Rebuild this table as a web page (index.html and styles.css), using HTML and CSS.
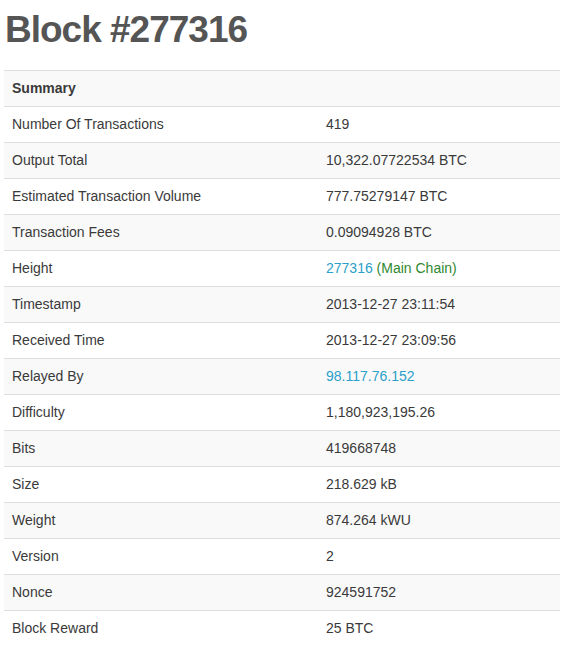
FILE: index.html
```html
<!DOCTYPE html>
<html>
<head>
<meta charset="utf-8">
<link rel="stylesheet" href="styles.css">
</head>
<body>
<div class="page">
  <h1 class="title">Block #277316</h1>
  <table class="summary">
    <tbody>
      <tr class="head"><th colspan="2">Summary</th></tr>
      <tr><td class="k">Number Of Transactions</td><td>419</td></tr>
      <tr><td class="k">Output Total</td><td>10,322.07722534 BTC</td></tr>
      <tr><td class="k">Estimated Transaction Volume</td><td>777.75279147 BTC</td></tr>
      <tr><td class="k">Transaction Fees</td><td>0.09094928 BTC</td></tr>
      <tr><td class="k">Height</td><td><a class="link">277316</a> <span class="main">(Main Chain)</span></td></tr>
      <tr><td class="k">Timestamp</td><td>2013-12-27 23:11:54</td></tr>
      <tr><td class="k">Received Time</td><td>2013-12-27 23:09:56</td></tr>
      <tr><td class="k">Relayed By</td><td><a class="link">98.117.76.152</a></td></tr>
      <tr><td class="k">Difficulty</td><td>1,180,923,195.26</td></tr>
      <tr><td class="k">Bits</td><td>419668748</td></tr>
      <tr><td class="k">Size</td><td>218.629 kB</td></tr>
      <tr><td class="k">Weight</td><td>874.264 kWU</td></tr>
      <tr><td class="k">Version</td><td>2</td></tr>
      <tr><td class="k">Nonce</td><td>924591752</td></tr>
      <tr><td class="k">Block Reward</td><td>25 BTC</td></tr>
    </tbody>
  </table>
</div>
</body>
</html>
```
FILE: styles.css
```css
html, body {
  margin: 0;
  padding: 0;
  background: #ffffff;
}
.page {
  padding: 0 10px 0 4px;
  font-family: "Liberation Sans", Arial, sans-serif;
  color: #333;
}
.title {
  margin: 0;
  padding: 10px 0 0 1px;
  height: 60px;
  box-sizing: border-box;
  font-size: 37px;
  line-height: 40px;
  font-weight: bold;
  letter-spacing: -1px;
  color: #555;
}
.summary {
  width: 556px;
  border-collapse: collapse;
  border-spacing: 0;
  font-size: 14px;
  margin-top: 10px;
}
.summary th,
.summary td {
  height: 36px;
  box-sizing: border-box;
  padding: 0 8px 2px;
  line-height: 20px;
  border-top: 1px solid #dddddd;
  text-align: left;
  vertical-align: middle;
  color: #3a3a3a;
}
.summary tr:nth-child(odd) {
  background: #f9f9f9;
}
.summary th {
  font-weight: bold;
}
.summary td.k {
  width: 314px;
}
.link {
  color: #2ba0c9;
  text-decoration: none;
}
.main {
  color: #2f8a2f;
}
```
